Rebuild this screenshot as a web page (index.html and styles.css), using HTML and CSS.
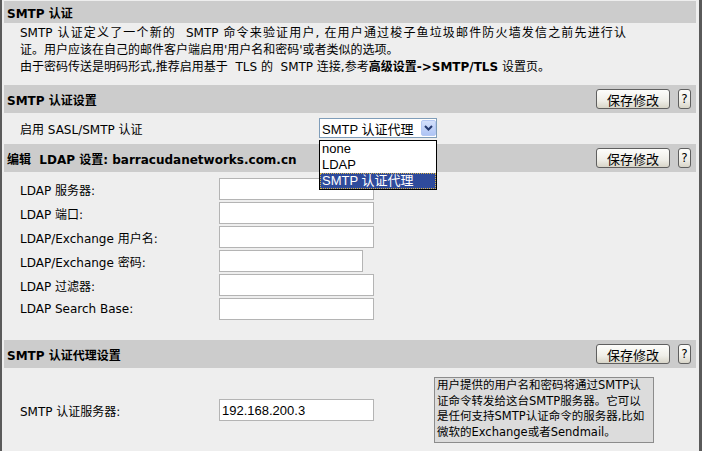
FILE: index.html
```html
<!DOCTYPE html>
<html lang="zh-CN">
<head>
  <meta charset="UTF-8" />
  <title>SMTP 认证</title>
  <link rel="stylesheet" href="styles.css">
</head>
<body>
  <div class="page">
    <div class="bar plain">
      <h2>SMTP 认证</h2>
    </div>
    <div class="intro">
      <span class="wrapped">SMTP 认证定义了一个新的&nbsp; SMTP 命令来验证用户, 在用户通过梭子鱼垃圾邮件防火墙发信之前先进行认</span>
      证。用户应该在自己的邮件客户端启用'用户名和密码'或者类似的选项。<br>
      由于密码传送是明码形式,推荐启用基于&nbsp; TLS 的&nbsp; SMTP 连接,参考<b>高级设置-&gt;SMTP/TLS</b> 设置页。
    </div>

    <div class="bar">
      <h2>SMTP 认证设置</h2>
      <div class="actions">
        <button class="btn save">保存修改</button>
        <button class="btn help">?</button>
      </div>
    </div>
    <div class="row sasl">
      <label>启用 SASL/SMTP 认证</label>
      <div class="select" id="modeSelect">
        <span class="select-value">SMTP 认证代理</span>
        <span class="select-arrow">
          <svg width="9" height="6" viewBox="0 0 9 6"><path d="M1 1 L4.5 4.5 L8 1" fill="none" stroke="#24386e" stroke-width="2"/></svg>
        </span>
        <ul class="select-menu">
          <li>none</li>
          <li>LDAP</li>
          <li class="active">SMTP 认证代理</li>
        </ul>
      </div>
    </div>

    <div class="bar">
      <h2>编辑&nbsp; LDAP 设置: barracudanetworks.com.cn</h2>
      <div class="actions">
        <button class="btn save">保存修改</button>
        <button class="btn help">?</button>
      </div>
    </div>
    <div class="fields ldap">
      <label>LDAP 服务器:</label><input type="text">
      <label>LDAP 端口:</label><input type="text">
      <label>LDAP/Exchange 用户名:</label><input type="text">
      <label>LDAP/Exchange 密码:</label><input type="password" class="short">
      <label>LDAP 过滤器:</label><input type="text">
      <label>LDAP Search Base:</label><input type="text">
    </div>

    <div class="bar">
      <h2>SMTP 认证代理设置</h2>
      <div class="actions">
        <button class="btn save">保存修改</button>
        <button class="btn help">?</button>
      </div>
    </div>
    <div class="fields proxy">
      <label>SMTP 认证服务器:</label>
      <input type="text" value="192.168.200.3">
      <div class="hint">
        用户提供的用户名和密码将通过SMTP认<br>
        证命令转发给这台SMTP服务器。它可以<br>
        是任何支持SMTP认证命令的服务器,比如<br>
        微软的Exchange或者Sendmail。
      </div>
    </div>
  </div>
</body>
</html>
```

FILE: styles.css
```css
body {
  margin: 0;
  background: #eeeeee;
  color: #000;
  font: 12px "DejaVu Sans", "Noto Sans CJK SC", sans-serif;
}
.page {
  border-left: 2px solid #5a5a5a;
  border-right: 3px solid #5a5a5a;
  padding: 1px 3px 0 2px;
  min-height: 450px;
}
.bar {
  background: #cccccc;
  height: 28px;
  padding: 0 5px 0 3px;
  display: flex;
  align-items: center;
  justify-content: space-between;
}
.bar.plain {
  height: 22px;
}
.bar h2 {
  margin: 0;
  font-size: 12px;
  font-weight: bold;
}
.actions {
  display: flex;
  gap: 8px;
}
.btn {
  height: 20px;
  padding: 0;
  border: 1px solid #5f5f5f;
  border-radius: 3px;
  background: linear-gradient(#fdfdfb, #efeee8 60%, #d8d5c8);
  font: 13px "DejaVu Sans", "Noto Sans CJK SC", sans-serif;
  color: #000;
}
.btn.save {
  width: 74px;
}
.btn.help {
  width: 13px;
  font-size: 12px;
}
.intro {
  padding: 2px 0 9px 16px;
  line-height: 17px;
}
/* first line of the wrapped paragraph, spread to the paragraph width */
.intro .wrapped {
  display: block;
  width: 606px;
  text-align: justify;
  text-align-last: justify;
}
.row {
  display: flex;
  align-items: center;
  padding: 5px 0 6px 16px;
}
.sasl label {
  width: 299px;
}
.select {
  position: relative;
  width: 118px;
  height: 20px;
  box-sizing: border-box;
  border: 1px solid #7f9db9;
  background: #fff;
  display: flex;
  align-items: center;
  justify-content: space-between;
  font: 13px "Liberation Sans", "Noto Sans CJK SC", sans-serif;
}
.select-value {
  padding-left: 2px;
}
.select-arrow {
  width: 15px;
  height: 16px;
  box-sizing: border-box;
  border: 1px solid #b5c8f3;
  border-radius: 2px;
  background: linear-gradient(#d4e0fb, #aec4f4);
  display: flex;
  align-items: center;
  justify-content: center;
}
.select-menu {
  position: absolute;
  top: 21px;
  left: -1px;
  width: 118px;
  box-sizing: border-box;
  margin: 0;
  padding: 0;
  list-style: none;
  background: #fff;
  border: 1px solid #000;
  z-index: 5;
}
.select-menu li {
  height: 16px;
  line-height: 16px;
  padding-left: 2px;
}
.select-menu li.active {
  background: #2f4b9b;
  color: #fff;
  outline: 1px dotted #d9b44a;
  outline-offset: -1px;
}
.fields {
  display: grid;
  align-items: center;
  justify-content: start;
  padding-left: 16px;
}
.fields.ldap {
  grid-template-columns: 199px auto;
  row-gap: 2px;
  padding-top: 6px;
  padding-bottom: 20px;
}
.fields input {
  width: 155px;
  height: 22px;
  box-sizing: border-box;
  margin: 0;
  padding: 0 2px;
  border: 1px solid #b4b4b4;
  background: #fff;
  font: 13px "Liberation Sans", sans-serif;
}
.fields input.short {
  width: 144px;
}
.fields.proxy {
  grid-template-columns: 199px 155px auto;
  padding-top: 9px;
}
.hint {
  margin-left: 60px;
  width: 220px;
  box-sizing: border-box;
  padding: 0 1px 2px 2px;
  border: 1px solid #8c8c8c;
  background: #dcdcdc;
  font-size: 11.5px;
  line-height: 15.5px;
}
```
